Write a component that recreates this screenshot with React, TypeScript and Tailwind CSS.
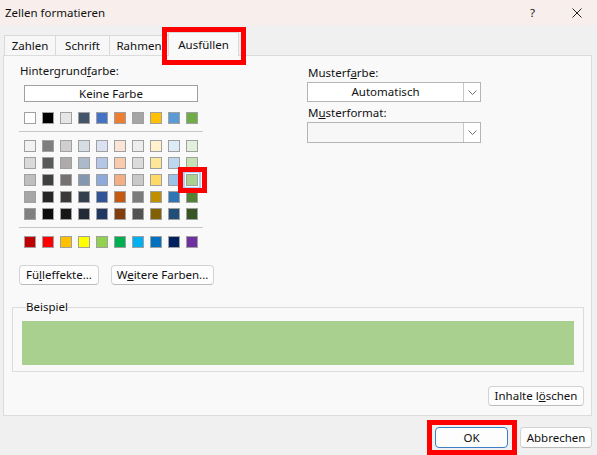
import React from 'react';

const themeRow = [
  'bg-[#FFFFFF]', 'bg-[#000000]', 'bg-[#E7E6E6]', 'bg-[#44546A]', 'bg-[#4472C4]',
  'bg-[#ED7D31]', 'bg-[#A5A5A5]', 'bg-[#FFC000]', 'bg-[#5B9BD5]', 'bg-[#70AD47]',
];

const tintRows = [
  ['bg-[#F2F2F2]', 'bg-[#7F7F7F]', 'bg-[#D0CECE]', 'bg-[#D6DCE4]', 'bg-[#D9E1F2]', 'bg-[#FCE4D6]', 'bg-[#EDEDED]', 'bg-[#FFF2CC]', 'bg-[#DDEBF7]', 'bg-[#E2EFDA]'],
  ['bg-[#D9D9D9]', 'bg-[#595959]', 'bg-[#AEAAAA]', 'bg-[#ACB9CA]', 'bg-[#B4C6E7]', 'bg-[#F8CBAD]', 'bg-[#DBDBDB]', 'bg-[#FFE699]', 'bg-[#BDD7EE]', 'bg-[#C6E0B4]'],
  ['bg-[#BFBFBF]', 'bg-[#404040]', 'bg-[#757171]', 'bg-[#8497B0]', 'bg-[#8EA9DB]', 'bg-[#F4B084]', 'bg-[#C9C9C9]', 'bg-[#FFD966]', 'bg-[#9BC2E6]', 'bg-[#A9D08E]'],
  ['bg-[#A6A6A6]', 'bg-[#262626]', 'bg-[#3A3838]', 'bg-[#333F4F]', 'bg-[#305496]', 'bg-[#C65911]', 'bg-[#7B7B7B]', 'bg-[#BF8F00]', 'bg-[#2F75B5]', 'bg-[#548235]'],
  ['bg-[#808080]', 'bg-[#0D0D0D]', 'bg-[#161616]', 'bg-[#222B35]', 'bg-[#203764]', 'bg-[#833C0C]', 'bg-[#525252]', 'bg-[#806000]', 'bg-[#1F4E78]', 'bg-[#375623]'],
];

const standardRow = [
  'bg-[#C00000]', 'bg-[#FF0000]', 'bg-[#FFC000]', 'bg-[#FFFF00]', 'bg-[#92D050]',
  'bg-[#00B050]', 'bg-[#00B0F0]', 'bg-[#0070C0]', 'bg-[#002060]', 'bg-[#7030A0]',
];

const Swatch: React.FC<{ color: string; selected?: boolean }> = ({ color, selected }) => (
  <div
    className={`w-[12px] h-[12px] border border-[#a0a0a0] ${color} ${
      selected ? 'outline-2 outline-[#a6d3f7] outline-offset-[1px]' : ''
    }`}
  />
);

const SwatchRow: React.FC<{ colors: string[]; selectedIndex?: number }> = ({ colors, selectedIndex }) => (
  <div className="flex gap-[6px]">
    {colors.map((c, i) => (
      <Swatch key={i} color={c} selected={i === selectedIndex} />
    ))}
  </div>
);

const Chevron = () => (
  <svg width="9" height="5" viewBox="0 0 9 5" fill="none">
    <path d="M0.5 0.5 L4.5 4.5 L8.5 0.5" stroke="#6d6d6d" strokeWidth="1" />
  </svg>
);

const Dropdown: React.FC<{ value?: string; filled?: boolean; h: string }> = ({ value, filled, h }) => (
  <div className={`w-[174px] ${h} flex border border-[#b5b5b5] ${filled ? 'bg-white' : 'bg-[#f7f7f7]'}`}>
    <div className="flex-1 flex items-center justify-center">{value}</div>
    <div className="w-[17px] flex items-center justify-center border-l border-[#c8c8c8] bg-white">
      <Chevron />
    </div>
  </div>
);

const Button: React.FC<{ w: string; h?: string; primary?: boolean; children: React.ReactNode }> = ({ w, h, primary, children }) => (
  <div
    className={`${w} ${h ?? 'h-[20px]'} flex items-center justify-center rounded-[4px] bg-[#fdfdfd] border ${
      primary ? 'border-[#3b82c4]' : 'border-[#d3d3d3] border-b-[#bcbcbc]'
    }`}
  >
    {children}
  </div>
);

export default function App() {
  return (
    <div className="w-[597px] h-[455px] bg-[#f0f0f0] relative overflow-hidden text-[11.5px] leading-[16px] text-[#111] font-['Noto_Sans',sans-serif]">
      {/* title bar */}
      <div className="h-[25px] bg-[#f8efec] flex items-center pl-[5px]">
        <span>Zellen formatieren</span>
        <span className="ml-auto">?</span>
        <svg className="ml-[37px] mr-[15px]" width="10" height="10" viewBox="0 0 10 10">
          <path d="M0.5 0.5 L9.5 9.5 M9.5 0.5 L0.5 9.5" stroke="#222" strokeWidth="1" />
        </svg>
      </div>

      {/* tabs */}
      <div className="h-[30px] flex items-end pl-[4px]">
        <div className="w-[52px] h-[20px] flex items-center justify-center border border-b-0 border-[#d9d9d9] bg-[#f7f7f7]">Zahlen</div>
        <div className="-ml-px w-[55px] h-[20px] flex items-center justify-center border border-b-0 border-[#d9d9d9] bg-[#f7f7f7]">Schrift</div>
        <div className="-ml-px w-[60px] h-[20px] flex items-center justify-center border border-b-0 border-[#d9d9d9] bg-[#f7f7f7]">Rahmen</div>
        <div className="-ml-px -mb-px relative z-10 w-[71px] h-[24px] flex items-center justify-center border border-b-0 border-[#d9d9d9] bg-[#f9f9f9]">Ausfüllen</div>
      </div>

      {/* panel */}
      <div className="ml-[3px] w-[589px] h-[361px] border border-[#dcdcdc] bg-[#f9f9f9] flex flex-col">
        <div className="flex">
          <div className="w-[303px] pl-[15px] pt-[7px]">
            <div className="pl-[1px]">
              Hintergrund<span className="underline">f</span>arbe:
            </div>
            <div className="mt-[6px] ml-[5px] w-[174px] h-[17px] border border-[#a0a0a0] bg-white flex items-center justify-center">
              Keine Farbe
            </div>
            <div className="mt-[10px] ml-[5px]">
              <SwatchRow colors={themeRow} />
            </div>
            <div className="mt-[7px] w-[184px] h-px bg-[#c6c6c6]" />
            <div className="mt-[8px] ml-[5px] flex flex-col gap-[5px]">
              {tintRows.map((row, i) => (
                <SwatchRow key={i} colors={row} selectedIndex={i === 2 ? 9 : undefined} />
              ))}
            </div>
            <div className="mt-[7px] w-[184px] h-px bg-[#c6c6c6]" />
            <div className="mt-[8px] ml-[5px]">
              <SwatchRow colors={standardRow} />
            </div>
            <div className="mt-[17px] flex gap-[12px]">
              <Button w="w-[80px]">
                <span>
                  Fü<span className="underline">l</span>leffekte...
                </span>
              </Button>
              <Button w="w-[103px]">
                <span>
                  W<span className="underline">e</span>itere Farben...
                </span>
              </Button>
            </div>
          </div>

          <div className="pt-[9px]">
            <div className="pl-[1px]">
              Musterf<span className="underline">a</span>rbe:
            </div>
            <div className="mt-[1px]">
              <Dropdown value="Automatisch" filled h="h-[20px]" />
            </div>
            <div className="mt-[3px] pl-[1px]">
              M<span className="underline">u</span>sterformat:
            </div>
            <div className="mt-[1px]">
              <Dropdown h="h-[21px]" />
            </div>
          </div>
        </div>

        <fieldset className="mt-[14px] ml-[8px] w-[572px] border border-[#dcdcdc] px-[9px] pt-[6px] pb-[6px]">
          <legend className="ml-[4px] leading-[16px]">Beispiel</legend>
          <div className="h-[44px] bg-[#A9D08E]" />
        </fieldset>

        <div className="mt-[14px] self-end mr-[7px]">
          <Button w="w-[96px]">
            <span>
              Inhalte l<span className="underline">ö</span>schen
            </span>
          </Button>
        </div>
      </div>

      {/* dialog buttons */}
      <div className="mt-[11px] flex justify-end gap-[12px] pr-[5px]">
        <Button w="w-[73px]" h="h-[21px]" primary>OK</Button>
        <Button w="w-[72px]" h="h-[21px]">Abbrechen</Button>
      </div>

      {/* annotation boxes */}
      <div className="absolute left-[162px] top-[27px] w-[84px] h-[38px] border-[5px] border-[#ff0000]" />
      <div className="absolute left-[178px] top-[167px] w-[29px] h-[26px] border-[5px] border-[#ff0000]" />
      <div className="absolute left-[427px] top-[420px] w-[90px] h-[35px] border-[5px] border-[#ff0000]" />
    </div>
  );
}
